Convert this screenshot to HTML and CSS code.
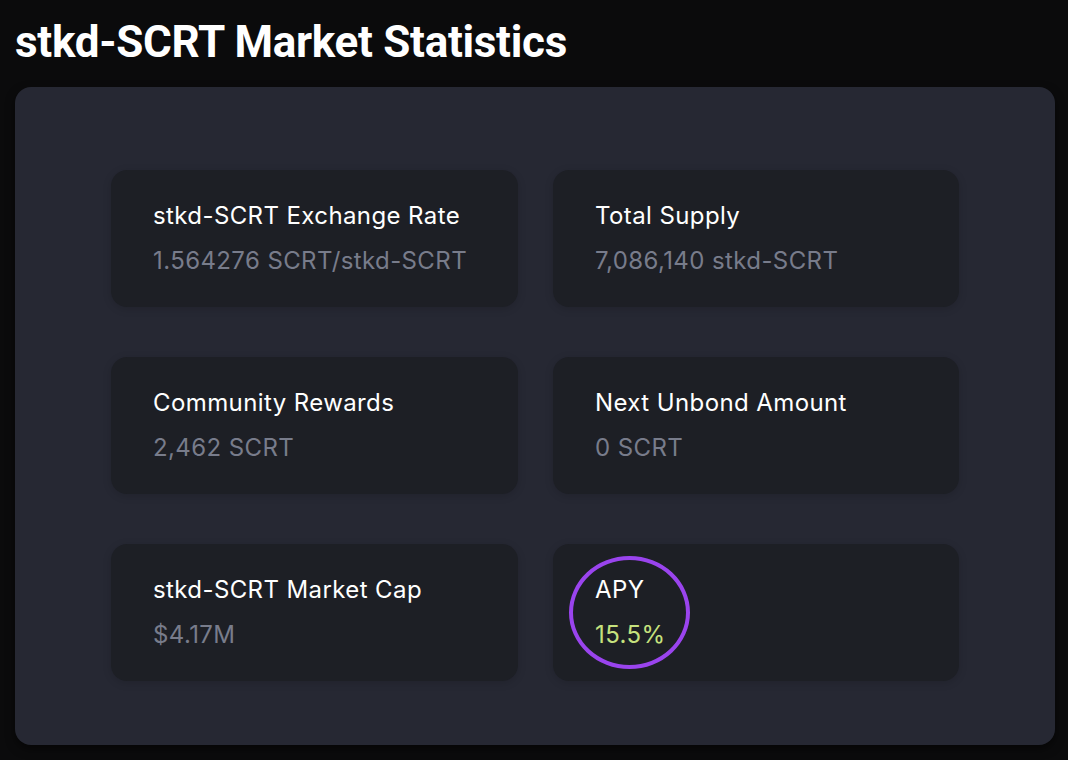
FILE: index.html
```html
<!DOCTYPE html>
<html lang="en">
<head>
    <meta charset="UTF-8">
    <meta name="viewport" content="width=device-width, initial-scale=1.0">
    <title>stkd-SCRT Market Statistics</title>
    <link rel="stylesheet" href="styles.css">
</head>
<body>

    <h1>stkd-SCRT Market Statistics</h1>

    <div class="panel">
        <div class="stats">
            <div class="stat-card">
                <div class="stat-label">stkd-SCRT Exchange Rate</div>
                <div class="stat-value">1.564276 SCRT/stkd-SCRT</div>
            </div>

            <div class="stat-card">
                <div class="stat-label">Total Supply</div>
                <div class="stat-value">7,086,140 stkd-SCRT</div>
            </div>

            <div class="stat-card">
                <div class="stat-label">Community Rewards</div>
                <div class="stat-value">2,462 SCRT</div>
            </div>

            <div class="stat-card">
                <div class="stat-label">Next Unbond Amount</div>
                <div class="stat-value">0 SCRT</div>
            </div>

            <div class="stat-card">
                <div class="stat-label">stkd-SCRT Market Cap</div>
                <div class="stat-value">$4.17M</div>
            </div>

            <!-- APY, circled -->
            <div class="stat-card">
                <div class="stat-label">APY</div>
                <div class="stat-value apy">15.5%</div>
                <span class="highlight-ring"></span>
            </div>
        </div>
    </div>

</body>
</html>
```

FILE: styles.css
```css
body {
    font-family: 'Inter', 'Open Sans', sans-serif;
    background-color: #0b0b0c;
    color: #fff;
    margin: 0;
    padding: 18px 13px 0 15px;
    height: 760px;
    box-sizing: border-box;
    overflow: hidden;
}

h1 {
    font-family: 'Roboto', sans-serif;
    font-weight: 700;
    font-size: 44px;
    line-height: 48px;
    margin: 0 0 21px 0;
    letter-spacing: -0.3px;
}

.panel {
    background-color: #262833;
    border-radius: 16px;
    padding: 83px 0 64px 0;
    box-shadow: 0px 4px 10px rgba(0, 0, 0, 0.5);
}

.stats {
    width: 848px;
    margin: 0 auto;
    display: grid;
    grid-template-columns: 407px 406px;
    column-gap: 35px;
    row-gap: 50px;
}

.stat-card {
    position: relative;
    background-color: #1d1f25;
    border-radius: 16px;
    padding: 30px 20px 32px 42px;
    height: 137px;
    box-sizing: border-box;
    box-shadow: 0px 2px 8px rgba(0, 0, 0, 0.15);
}

.stat-label {
    font-size: 24px;
    line-height: 32px;
    letter-spacing: 0.4px;
    color: #fff;
}

.stat-value {
    font-size: 24px;
    line-height: 32px;
    letter-spacing: 0.4px;
    margin-top: 13px;
    color: #787c8b;
}

.stat-value.apy {
    color: #c6e27e;
}

.highlight-ring {
    position: absolute;
    left: 16px;
    top: 12px;
    width: 121px;
    height: 113px;
    box-sizing: border-box;
    border: 4px solid #9a44ee;
    border-radius: 50%;
}
```
